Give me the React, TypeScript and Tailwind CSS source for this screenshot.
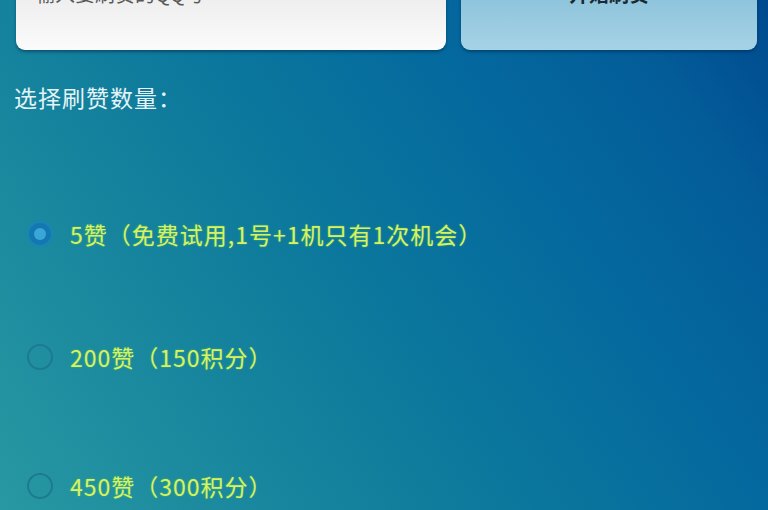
import React, { useState } from 'react';

const options = [
  { id: 5, label: '5赞（免费试用,1号+1机只有1次机会）', mt: 'mt-[108px]' },
  { id: 200, label: '200赞（150积分）', mt: 'mt-[95px]' },
  { id: 450, label: '450赞（300积分）', mt: 'mt-[101px]' },
];

const App: React.FC = () => {
  const [selected, setSelected] = useState(5);

  return (
    <div
      className="relative w-full h-[510px] overflow-hidden bg-[linear-gradient(235deg,#004a8f_0%,#035c98_14%,#04699e_32%,#0c789c_55%,#1a889e_78%,#2898a2_100%)]"
      style={{ fontFamily: '"Noto Sans CJK SC", "Noto Sans", sans-serif' }}
    >
      <div className="flex gap-[15px] pl-4 pr-[11px] -mt-[22px]">
        <div className="w-[430px] h-[72px] rounded-[9px] bg-[linear-gradient(180deg,#e9e9e9,#fbfbfb)] shadow-[0_2px_3px_rgba(0,40,70,0.5)] px-[19px] flex items-start">
          <span className="text-[20px] leading-[28px] text-[#585858] mt-[2px]">输入要刷赞的QQ号</span>
        </div>
        <button className="w-[296px] h-[72px] rounded-[9px] bg-[linear-gradient(180deg,#84bfd8,#a6d2e6)] shadow-[0_2px_3px_rgba(0,40,70,0.5)] flex items-start justify-center">
          <span className="text-[20px] leading-[28px] text-[#1a2a33] font-bold mt-[2px]">开始刷赞</span>
        </button>
      </div>

      <div className="mt-[32px] pl-[14px] text-[23px] leading-[30px] tracking-[1px] text-[#e4f3f7]">选择刷赞数量：</div>

      <div className="flex flex-col">
        {options.map((o) => (
          <label
            key={o.id}
            className={`${o.mt} flex items-center pl-[27px] h-[28px] cursor-pointer`}
            onClick={() => setSelected(o.id)}
          >
            <span
              className={
                selected === o.id
                  ? 'w-[26px] h-[26px] rounded-full border-2 border-[#1a86b8] bg-[#1478b0] flex items-center justify-center'
                  : 'w-[26px] h-[26px] rounded-full border-2 border-[#1d7a90]'
              }
            >
              {selected === o.id && <span className="w-[12px] h-[12px] rounded-full bg-[#3aa6d8]" />}
            </span>
            <span className="ml-[17px] text-[23px] leading-[28px] tracking-[1px] text-[#d6f260] [text-shadow:0_0_2px_rgba(120,220,80,0.6)]">
              {o.label}
            </span>
          </label>
        ))}
      </div>
    </div>
  );
};

export default App;
